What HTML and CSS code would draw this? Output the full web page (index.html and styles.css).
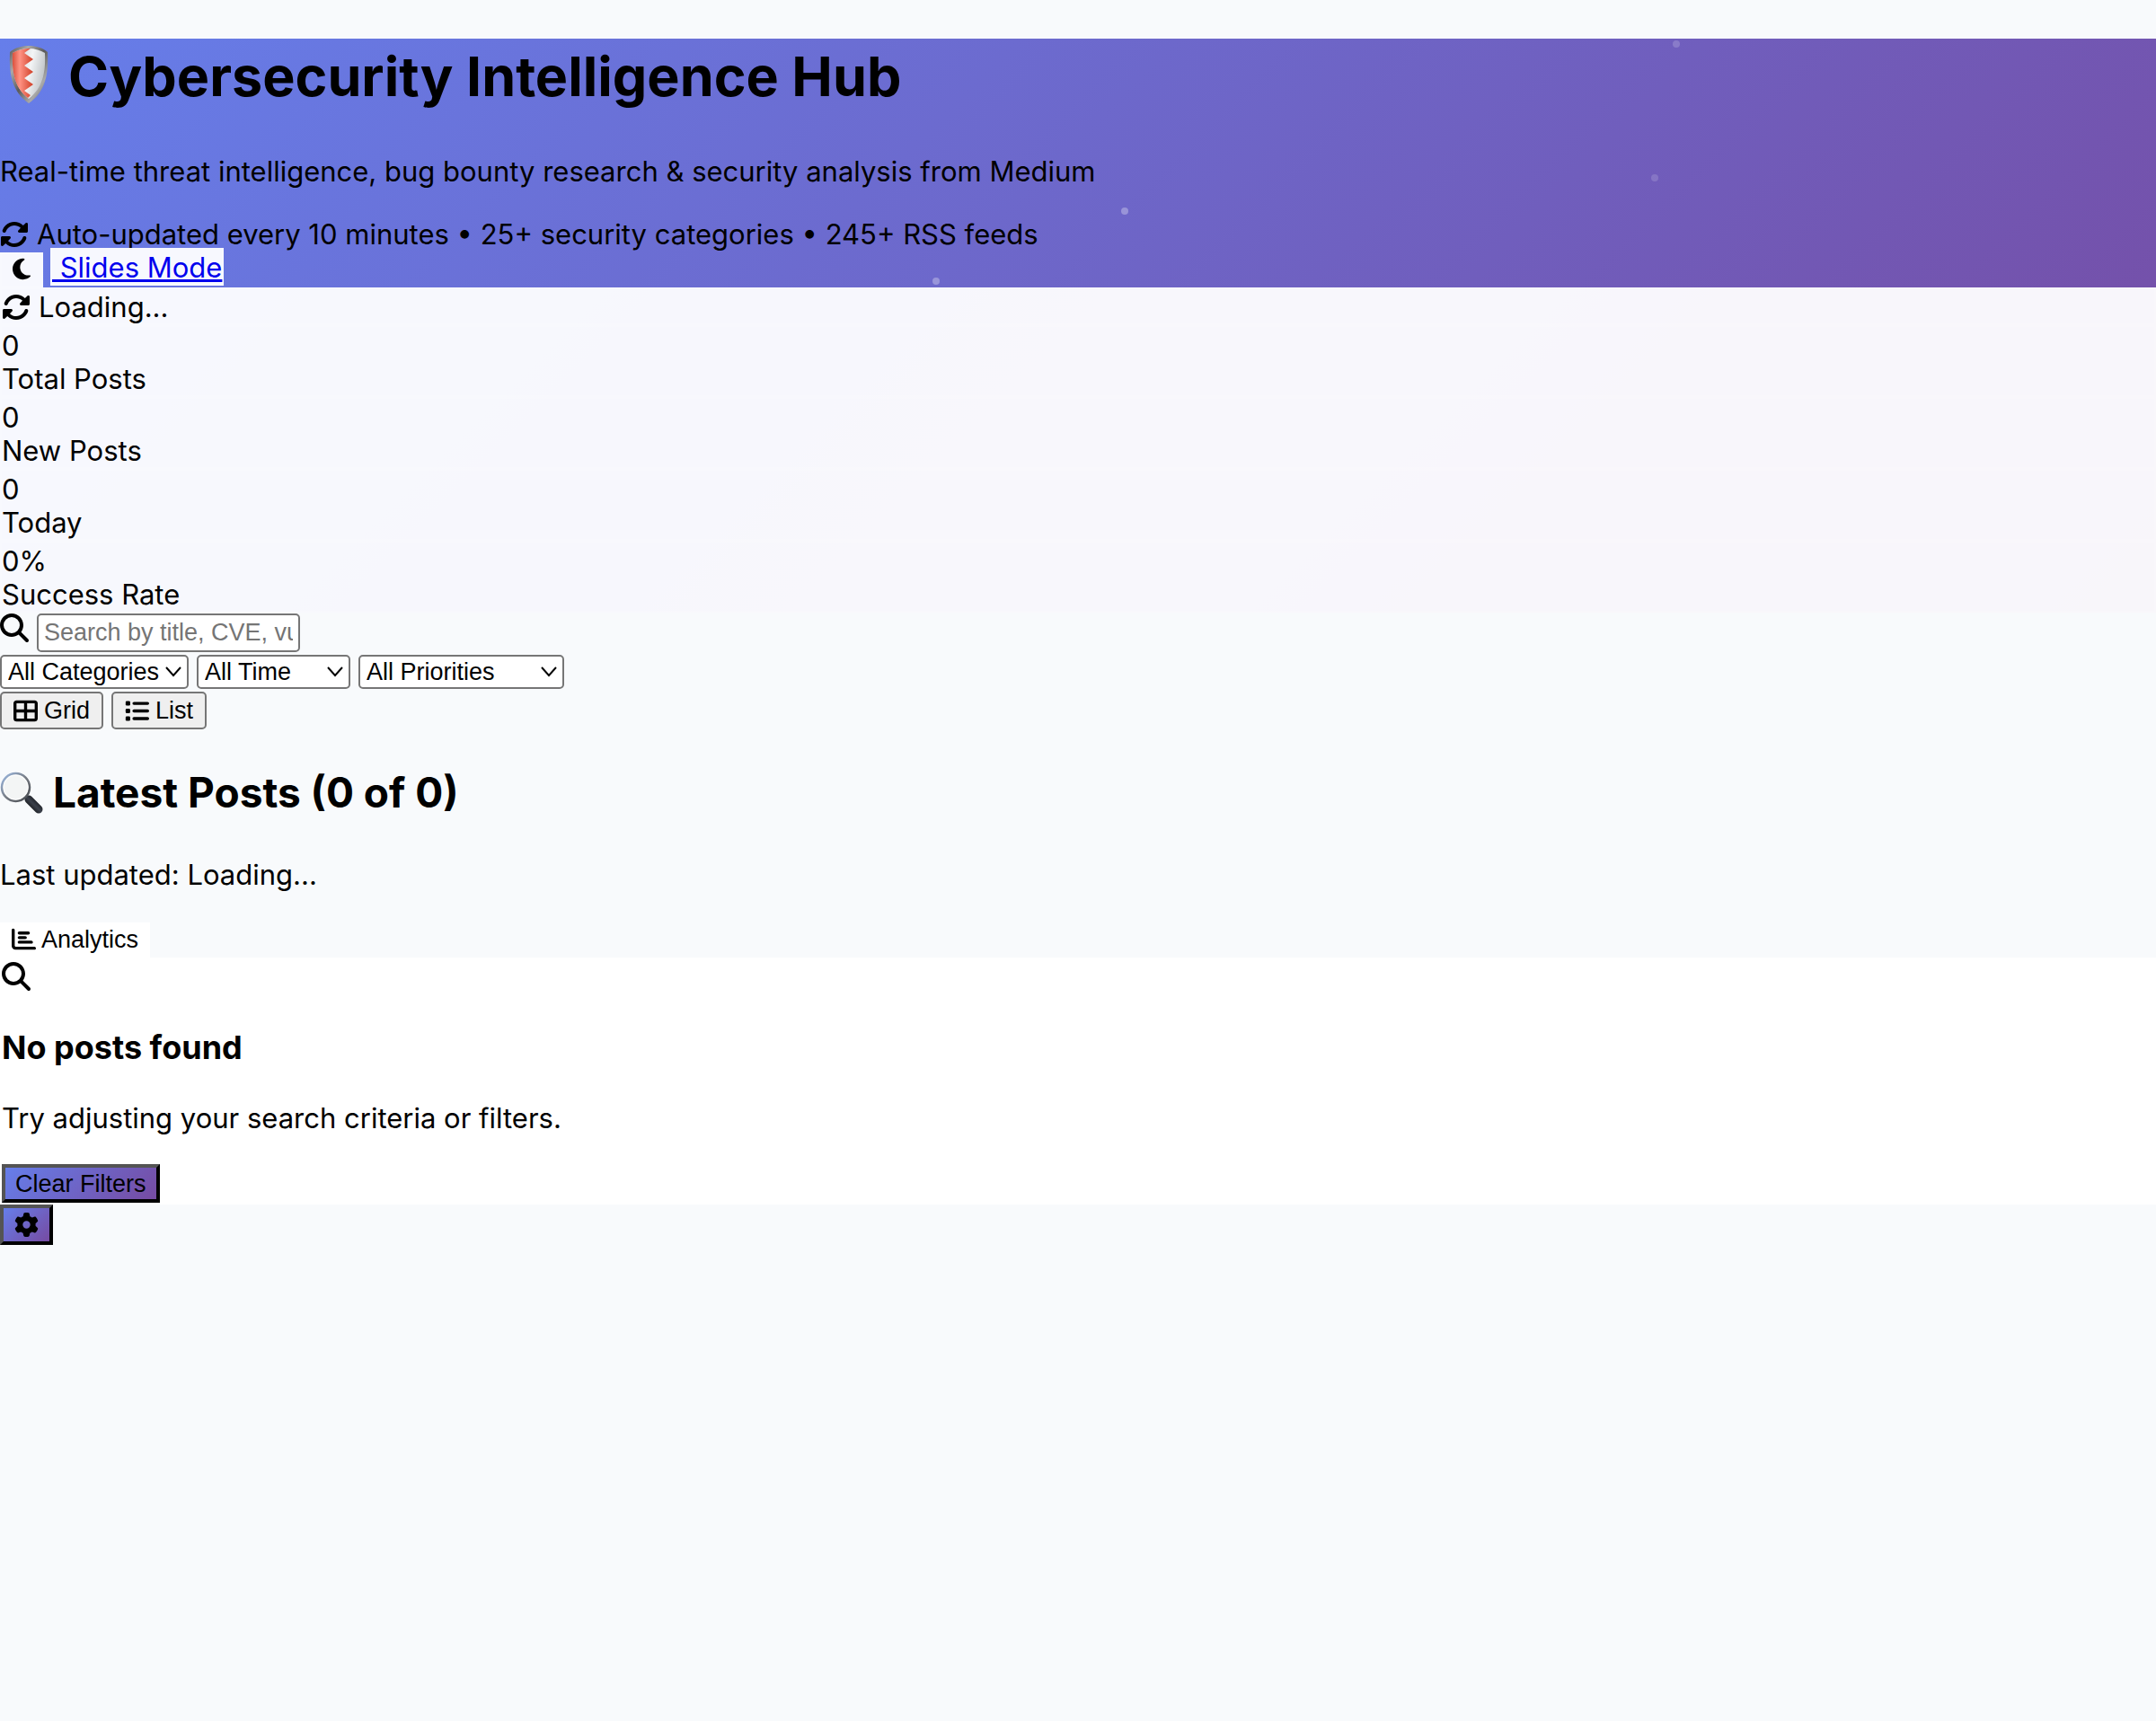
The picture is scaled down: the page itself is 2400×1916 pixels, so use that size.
FILE: index.html
```html
<!DOCTYPE html>
<html lang="en">
<head>
<meta charset="utf-8">
<meta name="viewport" content="width=device-width, initial-scale=1">
<title>Cybersecurity Intelligence Hub</title>
<link rel="stylesheet" href="styles.css">
</head>
<body>
<svg class="sprite" aria-hidden="true">
  <symbol id="i-sync" viewBox="0 0 512 512"><path d="M142.9 142.9c62.2-62.2 162.7-62.5 225.3-1L327 183c-6.9 6.9-8.9 17.2-5.2 26.2s12.5 14.8 22.2 14.8H463.5H472c13.3 0 24-10.7 24-24V72c0-9.7-5.8-18.5-14.8-22.2s-19.3-1.7-26.2 5.2L413.4 96.6c-87.6-86.5-228.7-86.2-315.8 1C73.2 122 55.6 150.7 44.8 181.4c-5.9 16.7 2.9 34.9 19.5 40.8s34.9-2.9 40.8-19.5c7.7-21.8 20.2-42.3 37.8-59.8zM16 312v7.6 .7V440c0 9.7 5.8 18.5 14.8 22.2s19.3 1.7 26.2-5.2l41.6-41.6c87.6 86.5 228.7 86.2 315.8-1c24.4-24.4 42.1-53.1 52.9-83.7c5.9-16.7-2.9-34.9-19.5-40.8s-34.9 2.9-40.8 19.5c-7.7 21.8-20.2 42.3-37.8 59.8c-62.2 62.2-162.7 62.5-225.3 1L185 329c6.9-6.9 8.9-17.2 5.2-26.2s-12.5-14.8-22.2-14.8H48.4h-.7H40c-13.3 0-24 10.7-24 24z"/></symbol>
  <symbol id="i-search" viewBox="0 0 512 512"><path d="M416 208c0 45.9-14.9 88.3-40 122.7L502.6 457.4c12.5 12.5 12.5 32.8 0 45.3s-32.8 12.5-45.3 0L330.7 376c-34.4 25.2-76.8 40-122.7 40C93.1 416 0 322.9 0 208S93.1 0 208 0S416 93.1 416 208zM208 352a144 144 0 1 0 0-288 144 144 0 1 0 0 288z"/></symbol>
  <symbol id="i-moon" viewBox="0 0 384 512"><path d="M223.5 32C100 32 0 132.3 0 256S100 480 223.5 480c60.6 0 115.5-24.2 155.8-63.4c5-4.9 6.3-12.5 3.1-18.7s-10.1-9.7-17-8.5c-9.8 1.7-19.8 2.6-30.1 2.6c-96.9 0-175.5-78.8-175.5-176c0-65.8 36-123.1 89.3-153.3c6.1-3.5 9.2-10.5 7.7-17.3s-7.3-11.9-14.3-12.5c-6.3-.5-12.6-.8-19-.8z"/></symbol>
  <symbol id="i-grid" viewBox="0 0 512 512"><path d="M448 96V224H288V96H448zm0 192V416H288V288H448zM224 224H64V96H224V224zM64 288H224V416H64V288zM64 32C28.7 32 0 60.7 0 96V416c0 35.3 28.7 64 64 64H448c35.3 0 64-28.7 64-64V96c0-35.3-28.7-64-64-64H64z"/></symbol>
  <symbol id="i-list" viewBox="0 0 512 512"><rect x="16" y="48" width="96" height="96" rx="24"/><rect x="16" y="208" width="96" height="96" rx="24"/><rect x="16" y="368" width="96" height="96" rx="24"/><rect x="160" y="64" width="352" height="64" rx="32"/><rect x="160" y="224" width="352" height="64" rx="32"/><rect x="160" y="384" width="352" height="64" rx="32"/></symbol>
  <symbol id="i-chart" viewBox="0 0 512 512"><path d="M32 32c17.7 0 32 14.3 32 32V400c0 8.8 7.2 16 16 16H480c17.7 0 32 14.3 32 32s-14.3 32-32 32H80c-44.2 0-80-35.8-80-80V64C0 46.3 14.3 32 32 32zm96 96c0-17.7 14.3-32 32-32l192 0c17.7 0 32 14.3 32 32s-14.3 32-32 32l-192 0c-17.7 0-32-14.3-32-32zm32 64H288c17.7 0 32 14.3 32 32s-14.3 32-32 32H160c-17.7 0-32-14.3-32-32s14.3-32 32-32zm0 96H416c17.7 0 32 14.3 32 32s-14.3 32-32 32H160c-17.7 0-32-14.3-32-32s14.3-32 32-32z"/></symbol>
  <symbol id="i-gear" viewBox="0 0 512 512"><path d="M495.9 166.6c3.2 8.7 .5 18.4-6.4 24.6l-43.3 39.4c1.1 8.3 1.7 16.8 1.7 25.4s-.6 17.1-1.7 25.4l43.3 39.4c6.9 6.2 9.6 15.9 6.4 24.6c-4.4 11.9-9.7 23.3-15.8 34.3l-4.7 8.1c-6.6 11-14 21.4-22.1 31.2c-5.9 7.2-15.7 9.6-24.5 6.8l-55.7-17.7c-13.4 10.3-28.2 18.9-44 25.4l-12.5 57.1c-2 9.1-9 16.3-18.2 17.8c-13.8 2.3-28 3.5-42.5 3.5s-28.7-1.2-42.5-3.5c-9.2-1.5-16.2-8.7-18.2-17.8l-12.5-57.1c-15.8-6.5-30.6-15.1-44-25.4L83.1 425.9c-8.8 2.8-18.6 .3-24.5-6.8c-8.1-9.8-15.5-20.2-22.1-31.2l-4.7-8.1c-6.1-11-11.4-22.4-15.8-34.3c-3.2-8.7-.5-18.4 6.4-24.6l43.3-39.4C64.6 273.1 64 264.6 64 256s.6-17.1 1.7-25.4L22.4 191.2c-6.9-6.2-9.6-15.9-6.4-24.6c4.4-11.9 9.7-23.3 15.8-34.3l4.7-8.1c6.6-11 14-21.4 22.1-31.2c5.9-7.2 15.7-9.6 24.5-6.8l55.7 17.7c13.4-10.3 28.2-18.9 44-25.4l12.5-57.1c2-9.1 9-16.3 18.2-17.8C227.3 1.2 241.5 0 256 0s28.7 1.2 42.5 3.5c9.2 1.5 16.2 8.7 18.2 17.8l12.5 57.1c15.8 6.5 30.6 15.1 44 25.4l55.7-17.7c8.8-2.8 18.6-.3 24.5 6.8c8.1 9.8 15.5 20.2 22.1 31.2l4.7 8.1c6.1 11 11.4 22.4 15.8 34.3zM256 336a80 80 0 1 0 0-160 80 80 0 1 0 0 160z"/></symbol>
</svg>

<header class="hero">
  <div class="particles" aria-hidden="true">
    <span class="particle particle-a"></span>
    <span class="particle particle-b"></span>
    <span class="particle particle-c"></span>
    <span class="particle particle-d"></span>
  </div>
  <h1 class="title">
    <svg class="shield" viewBox="0 0 64 72" aria-hidden="true">
      <defs>
        <linearGradient id="rim" x1="0" y1="0" x2="1" y2="1"><stop offset="0" stop-color="#555"/><stop offset=".25" stop-color="#a9a9a9"/><stop offset=".5" stop-color="#5a5a5a"/><stop offset=".75" stop-color="#aaa"/><stop offset="1" stop-color="#4c4c4c"/></linearGradient>
        <linearGradient id="red" x1="0" x2="1"><stop offset="0" stop-color="#d9503c"/><stop offset=".35" stop-color="#ff9384"/><stop offset="1" stop-color="#cf3f27"/></linearGradient>
        <linearGradient id="steel" x1="0" x2="1" y2=".3"><stop offset="0" stop-color="#c3c6c8"/><stop offset=".6" stop-color="#f3f5f6"/><stop offset="1" stop-color="#c4c8cb"/></linearGradient>
      </defs>
      <path fill="url(#rim)" d="M32 4C24 4 17 6 11 11C10 35 13 55 32 68C51 55 54 35 53 11C47 6 40 4 32 4z"/>
      <path fill="url(#steel)" d="M32 7C25 7 19 9 14 12C13 35 17 51 32 63C47 51 51 35 50 12C45 9 39 7 32 7z"/>
      <path fill="url(#red)" d="M34 7C26 7 19 9 14 12C13 35 17 51 31 62L34 59L27 54L37 47L27 40L37 33L27 26L37 19L27 12z"/>
    </svg>
    <span>Cybersecurity Intelligence Hub</span>
  </h1>
  <p class="tagline">Real-time threat intelligence, bug bounty research &amp; security analysis from Medium</p>
  <div class="meta"><svg class="icon"><use href="#i-sync"/></svg><span>Auto-updated every 10 minutes • 25+ security categories • 245+ RSS feeds</span></div>
  <div class="actions">
    <button class="theme glass" type="button" aria-label="Toggle dark mode"><svg class="icon-moon"><use href="#i-moon"/></svg></button>
    <a class="slides glass" href="#slides">&nbsp;Slides Mode</a>
  </div>
  <div class="status glass"><svg class="icon"><use href="#i-sync"/></svg><span>Loading...</span></div>
  <div class="stat glass"><div>0</div><div>Total Posts</div></div>
  <div class="stat glass"><div>0</div><div>New Posts</div></div>
  <div class="stat glass"><div>0</div><div>Today</div></div>
  <div class="stat glass"><div>0%</div><div>Success Rate</div></div>
</header>

<main>
  <section class="controls">
    <div class="row">
      <label class="search-label" for="search" aria-label="Search posts"><svg class="icon"><use href="#i-search"/></svg></label>
      <input class="search" id="search" type="text" placeholder="Search by title, CVE, vulnerability...">
    </div>
    <div class="row">
      <select class="select" aria-label="Category"><option>All Categories</option></select>
      <select class="select select-time" aria-label="Time"><option>All Time</option></select>
      <select class="select select-priority" aria-label="Priority"><option>All Priorities</option></select>
    </div>
    <div class="row">
      <button class="view" type="button"><svg class="icon-small"><use href="#i-grid"/></svg>Grid</button>
      <button class="view" type="button"><svg class="icon-small"><use href="#i-list"/></svg>List</button>
    </div>
  </section>

  <h2 class="latest">
    <svg class="lens" viewBox="0 0 48 48" aria-hidden="true">
      <defs>
        <linearGradient id="ring" x1="0" y1="0" x2="1" y2="1"><stop offset="0" stop-color="#9dbbe6"/><stop offset=".5" stop-color="#777c84"/><stop offset="1" stop-color="#43464b"/></linearGradient>
        <linearGradient id="grip" x1="0" y1="1" x2="1" y2="0"><stop offset="0" stop-color="#111"/><stop offset=".5" stop-color="#3a3f4a"/><stop offset="1" stop-color="#15171b"/></linearGradient>
      </defs>
      <path d="M28 28L32 32" stroke="#777" stroke-width="4"/>
      <path d="M32 31L43 42" stroke="url(#grip)" stroke-width="9" stroke-linecap="round"/>
      <circle cx="17.500" cy="17.500" r="15.500" fill="#f3f5f5" stroke="url(#ring)" stroke-width="2.500"/>
      <circle cx="17.500" cy="17.500" r="13.500" fill="none" stroke="#fff" stroke-width="1"/>
    </svg>
    <span>Latest Posts (0 of 0)</span>
  </h2>
  <p class="updated">Last updated: Loading...</p>
  <button class="analytics" type="button"><svg class="icon-small"><use href="#i-chart"/></svg>Analytics</button>

  <section class="empty">
    <svg class="icon empty-icon"><use href="#i-search"/></svg>
    <h3 class="empty-title">No posts found</h3>
    <p class="empty-text">Try adjusting your search criteria or filters.</p>
    <button class="primary" type="button">Clear Filters</button>
  </section>
  <button class="primary settings" type="button" aria-label="Settings"><svg class="icon-small"><use href="#i-gear"/></svg></button>
</main>
</body>
</html>
```
FILE: styles.css
```css
* {
  box-sizing: border-box;
}

body {
  margin: 0;
  padding-top: 43px;
  background: #f8fafc;
  color: #000;
  font: 31px/38px Inter, "Liberation Sans", sans-serif;
}

h1, h2, h3, p {
  margin: 0;
}

button, input, select {
  margin: 0;
  color: #000;
  font: 27px/30px "Liberation Sans", Arial, sans-serif;
}

svg {
  display: block;
  flex: none;
  fill: currentColor;
}

.sprite {
  position: absolute;
  width: 0;
  height: 0;
}

.icon {
  width: 32px;
  height: 32px;
}

.icon-small {
  width: 27px;
  height: 27px;
}

.icon-moon {
  width: 20px;
  height: 27px;
}

.glass {
  background: rgba(255, 255, 255, 0.95);
  border: 2px solid rgba(255, 255, 255, 0.2);
}

/* Header */
.hero {
  position: relative;
  background: linear-gradient(135deg, #667eea 0%, #764ba2 100%);
}

.particle {
  position: absolute;
  width: 8px;
  height: 8px;
  border-radius: 50%;
  background: rgba(255, 255, 255, 0.3);
}

.particle-a { left: 43.25%; top: 266px; }
.particle-b { left: 52%; top: 188px; }
.particle-c { left: 77.6%; top: 2px; opacity: 0.6; }
.particle-d { left: 76.6%; top: 151px; opacity: 0.5; }

.title {
  display: flex;
  align-items: flex-start;
  gap: 12px;
  margin-bottom: 46px;
  padding-top: 1px;
  font-size: 61px;
  line-height: 82px;
}

.shield {
  width: 64px;
  height: 72px;
  margin-top: 3px;
}

.tagline {
  margin-bottom: 32px;
}

.meta, .status {
  display: flex;
  align-items: center;
  gap: 9px;
}

.actions {
  display: flex;
  gap: 8px;
  min-height: 44px;
  margin-top: -4px;
}

.theme {
  align-self: flex-end;
  height: 39px;
  padding: 3px 12px 5px;
}

.slides {
  align-self: flex-start;
  padding-top: 2px;
  color: #00e;
  line-height: 36px;
}

.status {
  padding-top: 2px;
  line-height: 36px;
}

.stat {
  padding-top: 2px;
  line-height: 37px;
}

/* Filters */
.row {
  display: flex;
  align-items: center;
  gap: 9px;
}

.controls {
  display: grid;
  gap: 3px;
  padding-top: 1px;
}

.search-label {
  align-self: flex-start;
}

.search {
  width: 293px;
  height: 43px;
  padding: 2px 6px;
  background: #fff;
  border: 2px solid #767676;
  border-radius: 5px;
}

.search::placeholder {
  color: #757575;
}

.select {
  width: 210px;
  height: 38px;
  padding: 0 28px 0 7px;
  appearance: none;
  background: #fff url("data:image/svg+xml,%3Csvg xmlns='http://www.w3.org/2000/svg' width='18' height='12'%3E%3Cpath d='M1 1L9 10L17 1' fill='none' stroke='black' stroke-width='2'/%3E%3C/svg%3E") no-repeat right 6px center;
  border: 2px solid #767676;
  border-radius: 5px;
}

.select-time {
  width: 171px;
}

.select-priority {
  width: 229px;
}

.view {
  display: flex;
  align-items: center;
  gap: 7px;
  height: 42px;
  padding: 2px 13px;
  background: #efefef;
  border: 2px solid #767676;
  border-radius: 5px;
}

/* Results */
.latest {
  display: flex;
  align-items: center;
  gap: 11px;
  margin: 39px 0 41px;
  font-size: 46px;
  line-height: 63px;
}

.lens {
  width: 48px;
  height: 48px;
}

.updated {
  margin-bottom: 34px;
}

.analytics {
  display: flex;
  align-items: center;
  gap: 6px;
  height: 39px;
  padding: 3px 13px 5px;
  background: #fff;
  border: 0;
}

.empty {
  padding: 2px;
  background: #fff;
}

.empty-icon {
  margin: 3px 0;
}

.empty-title {
  margin: 41px 0 38px;
  font-size: 36px;
  line-height: 44px;
}

.empty-text {
  margin-bottom: 32px;
}

.primary {
  display: block;
  height: 43px;
  padding: 2px 11px;
  background: linear-gradient(135deg, #667eea 0%, #764ba2 100%);
  border: 4px outset #000;
}

.settings {
  height: 45px;
  padding: 2px 12px;
}
```
